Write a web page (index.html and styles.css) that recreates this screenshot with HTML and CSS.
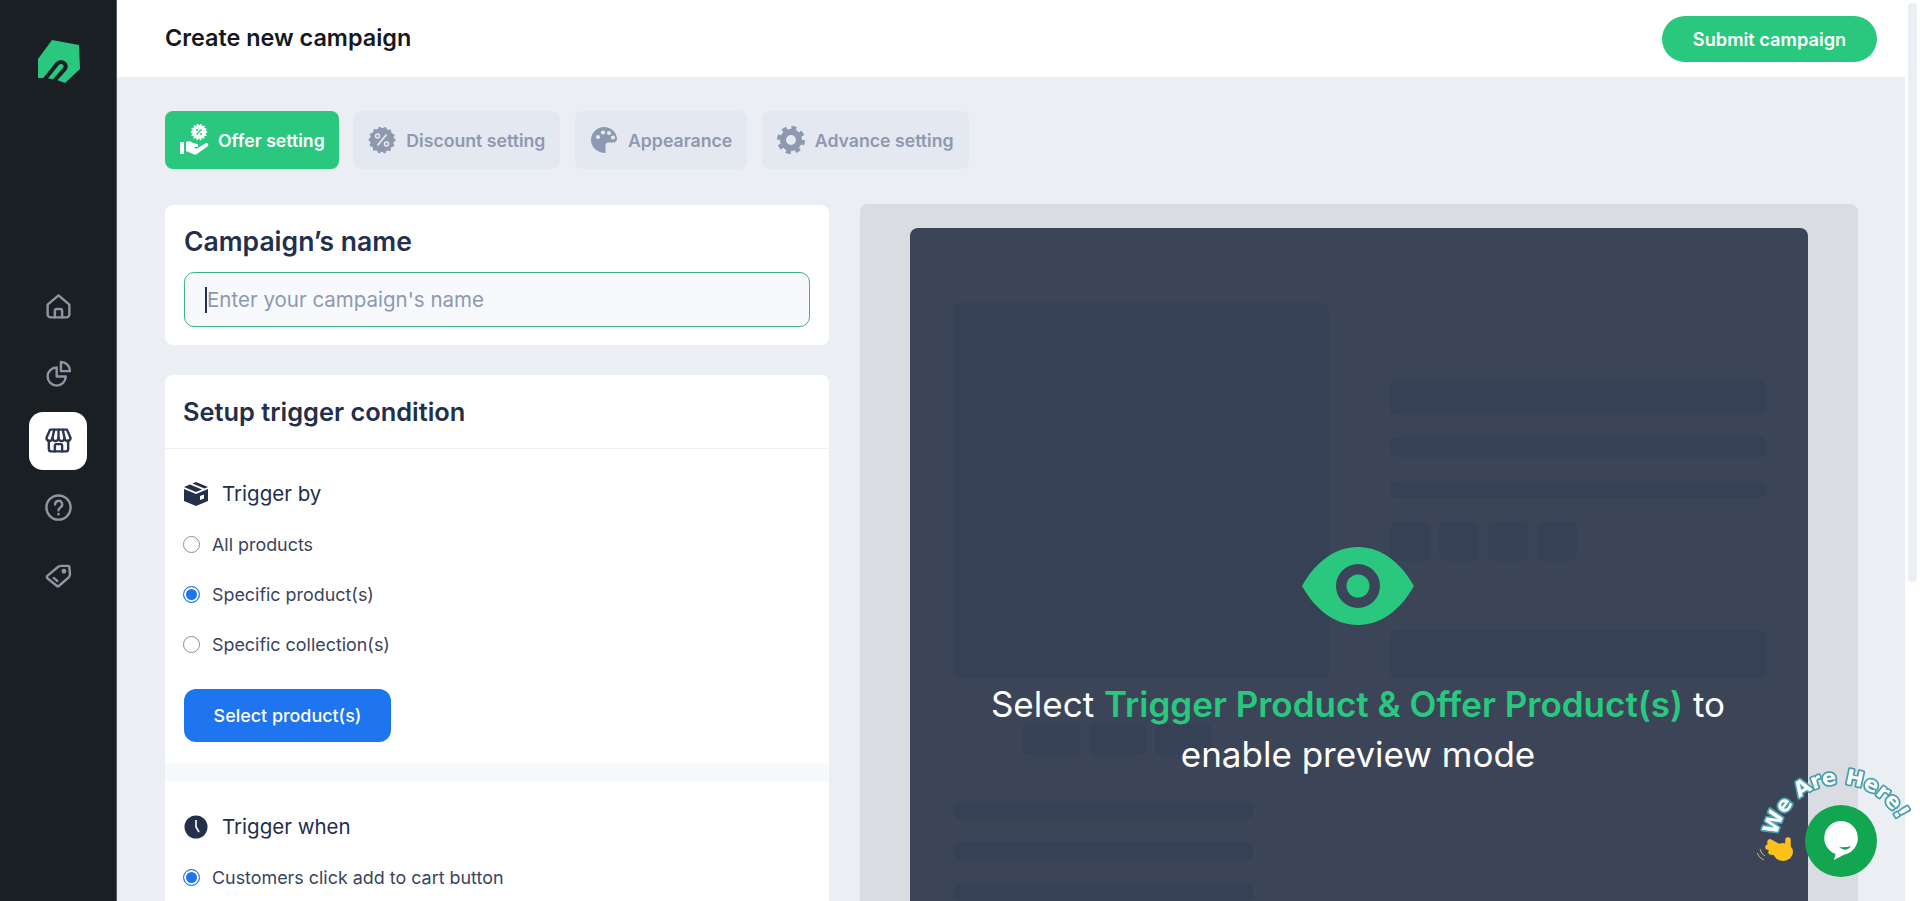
FILE: index.html
```html
<!DOCTYPE html>
<html lang="en">
<head>
    <meta charset="UTF-8">
    <title>Create new campaign</title>
    <link rel="stylesheet" href="styles.css">
</head>
<body>
<div class="app">
    <aside class="sidebar">
        <div class="logo">
            <svg width="42" height="44" viewBox="0 0 42 44"><path d="M14 1 L41 6 L42 30 L27 44 L19 41 L8 39 L0 39 L0 20 Z" fill="#2ac87e"/><path d="M7 40 L19 25 Q23 21 27 25 Q29 28 26 31 L16 42" fill="none" stroke="#1a1f24" stroke-width="4"/></svg>
        </div>
        <nav class="nav">
            <a class="nav-item"><svg viewBox="0 0 24 24"><path d="M3 10.5 L12 2.8 L21 10.5 V18.5 a2.5 2.5 0 0 1-2.5 2.5 H5.5 A2.5 2.5 0 0 1 3 18.5 Z"/><path d="M9 21 V15.5 a1.5 1.5 0 0 1 1.5-1.5 h3 a1.5 1.5 0 0 1 1.5 1.5 V21"/></svg></a>
            <a class="nav-item"><svg viewBox="0 0 24 24"><path d="M10.5 7 a7.5 7.5 0 1 0 7.5 7.5 h-7.5 Z"/><path d="M14 2.5 a7.5 7.5 0 0 1 7.5 7.5 H14 Z"/></svg></a>
            <a class="nav-item active"><svg viewBox="0 0 24 24"><path d="M5 3 H19 L22 10 a2.5 2.5 0 0 1-5 0 a2.5 2.5 0 0 1-5 0 a2.5 2.5 0 0 1-5 0 a2.5 2.5 0 0 1-5 0 Z"/><path d="M7 10 L8.5 3 M12 10 V3 M17 10 L15.5 3"/><path d="M4 12 V19 a2 2 0 0 0 2 2 H18 a2 2 0 0 0 2-2 V12"/><path d="M9 21 V16 a1 1 0 0 1 1-1 h4 a1 1 0 0 1 1 1 V21"/></svg></a>
            <a class="nav-item"><svg viewBox="0 0 24 24"><circle cx="12" cy="12" r="10"/><path d="M9.2 9.5 a2.9 2.9 0 1 1 4.4 2.4 c-1 .7-1.6 1.2-1.6 2.4"/><path d="M12 17.4 v.2"/></svg></a>
            <a class="nav-item"><svg viewBox="0 0 24 24"><path d="M2.5 12.5 L11.5 5 Q12.5 4 14 4 H20 a1 1 0 0 1 1 1 L21.5 11 Q21.5 12.5 20.5 13.5 L12.5 20.5 Q11.5 21.5 10.5 20.5 L3 14.5 Q2 13.5 2.5 12.5 Z"/><circle cx="16.5" cy="8.5" r="1"/><path d="M8 14 L11 16.5"/></svg></a>
        </nav>
    </aside>

    <main class="main">
        <header class="topbar">
            <h1 class="page-title">Create new campaign</h1>
            <button class="submit-btn">Submit campaign</button>
        </header>

        <div class="content">
            <div class="tabs">
                <div class="tab selected">
                    <svg class="tab-icon offer" viewBox="0 0 32 32"><circle cx="20" cy="8" r="7" fill="#fff"/><circle cx="20" cy="8" r="7.4" fill="none" stroke="#fff" stroke-width="1.8" stroke-linecap="round" stroke-dasharray="0 3.32"/><path d="M17.5 10.5 L22.5 5.5" stroke="#2ac87e" stroke-width="1.3"/><circle cx="18" cy="6" r="1" fill="#2ac87e"/><circle cx="22" cy="10" r="1" fill="#2ac87e"/><rect x="1" y="18" width="4" height="12" fill="#fff"/><path d="M7 18 Q11 16 14 19 L18 20 Q20 21 18.5 23 L15 23 L17 25 L27 19 Q30 19 29 22 L18 30 Q16 31 14 30 L7 27 Z" fill="#fff"/></svg>
                    <span>Offer setting</span>
                </div>
                <div class="tab">
                    <svg class="tab-icon" viewBox="0 0 28 28"><circle cx="14" cy="14" r="12" fill="#8e99b0"/><circle cx="14" cy="14" r="12" fill="none" stroke="#8e99b0" stroke-width="3" stroke-linecap="round" stroke-dasharray="0 5.386"/><path d="M9.5 19.5 L18.5 8.5" stroke="#e4e8f0" stroke-width="1.8"/><circle cx="9.5" cy="10" r="2" fill="none" stroke="#e4e8f0" stroke-width="1.5"/><circle cx="18.5" cy="18" r="2" fill="none" stroke="#e4e8f0" stroke-width="1.5"/></svg>
                    <span>Discount setting</span>
                </div>
                <div class="tab">
                    <svg class="tab-icon" viewBox="0 0 28 28"><path d="M14 1 C21 1 27 6.5 27 13 C27 15 25.5 16.5 23 16.5 H18.5 C16 16.5 15.5 18 15.5 20 V27 C7.5 27 1 21 1 14 C1 7 7 1 14 1 Z" fill="#8e99b0"/><circle cx="8" cy="11" r="2.1" fill="#e4e8f0"/><circle cx="13" cy="6.5" r="2.1" fill="#e4e8f0"/><circle cx="19" cy="7" r="2.1" fill="#e4e8f0"/><circle cx="23" cy="11.5" r="2.1" fill="#e4e8f0"/></svg>
                    <span>Appearance</span>
                </div>
                <div class="tab">
                    <svg class="tab-icon" viewBox="0 0 28 28"><circle cx="14" cy="14" r="8" fill="none" stroke="#8e99b0" stroke-width="6"/><circle cx="14" cy="14" r="12" fill="none" stroke="#8e99b0" stroke-width="4" stroke-dasharray="4.9 4.52"/></svg>
                    <span>Advance setting</span>
                </div>
            </div>

            <div class="columns">
                <section class="settings">
                    <div class="card name-card">
                        <h2 class="card-title name-title">Campaign’s name</h2>
                        <div class="input"><span class="caret"></span>Enter your campaign's name</div>
                    </div>

                    <div class="card trigger-card">
                        <h2 class="card-title trigger-title">Setup trigger condition</h2>
                        <div class="group">
                            <h3 class="group-title">
                                <svg class="group-icon" viewBox="0 0 26 26"><path d="M1 8 L13 13 V25 L1 20 Z M25 8 L13 13 V25 L25 20 Z" fill="#232f4b"/><path d="M1 6 L7 3.5 L19 8.5 L13 11 Z M9.5 2.5 L13 1 L25 6 L21.5 7.5 Z" fill="#232f4b"/><path d="M17 15 V19 L21 17.5 V13.5 Z" fill="#fff"/></svg>
                                Trigger by
                            </h3>
                            <label class="radio"><span class="dot"></span>All products</label>
                            <label class="radio"><span class="dot on"></span>Specific product(s)</label>
                            <label class="radio"><span class="dot"></span>Specific collection(s)</label>
                            <button class="select-btn">Select product(s)</button>
                        </div>
                        <div class="band"></div>
                        <div class="group">
                            <h3 class="group-title">
                                <svg class="group-icon" viewBox="0 0 26 26"><circle cx="13" cy="13" r="11.5" fill="#232f4b"/><path d="M13 6 V13 L16 18" fill="none" stroke="#fff" stroke-width="1.6"/></svg>
                                Trigger when
                            </h3>
                            <label class="radio"><span class="dot on"></span>Customers click add to cart button</label>
                        </div>
                    </div>
                </section>

                <section class="preview">
                    <div class="preview-inner">
                        <div class="skeleton">
                            <div class="sk-left">
                                <div class="sk sk-image"></div>
                                <div class="sk-thumbs">
                                    <div class="sk"></div>
                                    <div class="sk"></div>
                                    <div class="sk"></div>
                                </div>
                                <div class="sk sk-line"></div>
                                <div class="sk sk-line"></div>
                                <div class="sk sk-line"></div>
                            </div>
                            <div class="sk-right">
                                <div class="sk sk-title"></div>
                                <div class="sk sk-row"></div>
                                <div class="sk sk-row short"></div>
                                <div class="sk-swatches">
                                    <div class="sk"></div>
                                    <div class="sk"></div>
                                    <div class="sk"></div>
                                    <div class="sk"></div>
                                </div>
                                <div class="sk sk-buy"></div>
                            </div>
                        </div>
                        <div class="overlay">
                            <svg class="eye" viewBox="0 0 112 78"><path fill-rule="evenodd" d="M0 39 C14 14 34 0 56 0 C78 0 98 14 112 39 C98 64 78 78 56 78 C34 78 14 64 0 39 Z M56 17 a22 22 0 1 0 0 44 a22 22 0 1 0 0-44 Z" fill="#2ac87e"/><circle cx="56" cy="39" r="11.5" fill="#2ac87e"/></svg>
                            <p class="overlay-text">Select <b>Trigger Product &amp; Offer Product(s)</b> to<br>enable preview mode</p>
                        </div>
                    </div>
                </section>
            </div>
        </div>
    </main>

    <div class="scrollbar"><div class="thumb"></div></div>
</div>

<div class="chat">
    <svg width="170" height="125" viewBox="0 0 170 125">
        <defs><path id="arc" d="M27 76 A64 64 0 0 1 150 66"/></defs>
        <text class="chat-label"><textPath href="#arc" textLength="160" lengthAdjust="spacingAndGlyphs">We Are Here!</textPath></text>
        <circle cx="91" cy="81" r="36" fill="#11a64f"/>
        <path d="M91 61 a17 17 0 0 1 3 33.7 L84 100 L85.5 94 A17 17 0 0 1 91 61 Z" fill="#fff"/>
        <path d="M89 87 Q95 88 101 86 Q96 93 89 87 Z" fill="#11a64f"/>
        <g class="wave">
            <ellipse cx="33" cy="92" rx="10" ry="9" fill="#fcc21b" stroke="none"/>
            <path d="M31 88 L20 82 M31 90 L18 87 M31 93 L21 92 M38 88 L38 80"/>
        </g>
        <path d="M10 89 Q11 94 15 96 M7 93 Q9 98 14 100" fill="none" stroke="#d9b64a" stroke-width="1"/>
    </svg>
</div>
</body>
</html>
```

FILE: styles.css
```css
*{
    margin: 0;
    padding: 0;
    box-sizing: border-box;
}
html,body{
    height: 901px;
    overflow: hidden;
}
body{
    font-family: Inter, "Noto Sans", sans-serif;
    color: #232f4b;
    background: #fff;
}
button{
    border: 0;
    font-family: inherit;
}
.app{
    display: flex;
    height: 901px;
}

/* sidebar */
.sidebar{
    width: 117px;
    flex-shrink: 0;
    background: #1a1f24;
    border-right: 1px solid #555a60;
}
.logo{
    height: 277px;
    padding: 39px 0 0 38px;
}
.nav{
    display: flex;
    flex-direction: column;
    align-items: center;
    gap: 9.3px;
}
.nav-item{
    width: 58px;
    height: 58px;
    border-radius: 14px;
    display: flex;
    align-items: center;
    justify-content: center;
}
.nav-item svg{
    width: 29px;
    height: 29px;
    fill: none;
    stroke: #8e95a3;
    stroke-width: 2;
    stroke-linecap: round;
    stroke-linejoin: round;
}
.nav-item.active{
    background: #fff;
}
.nav-item.active svg{
    stroke: #2b3654;
}

/* top */
.main{
    flex: 1;
    min-width: 0;
    background: #ebeef3;
    overflow: hidden;
}
.topbar{
    height: 77px;
    background: #fff;
    display: flex;
    align-items: center;
    justify-content: space-between;
    padding: 0 28px 0 48px;
}
.page-title{
    font-size: 23.4px;
    font-weight: 600;
    color: #14181f;
    margin-bottom: 2px;
}
.submit-btn{
    width: 215px;
    height: 46px;
    border-radius: 23px;
    background: #2ac87e;
    color: #fff;
    font-size: 18.2px;
    font-weight: 600;
}
.content{
    padding: 34px 47px 0 48px;
}

/* tabs */
.tabs{
    display: flex;
    gap: 14.5px;
}
.tab{
    height: 58px;
    padding: 0 15px;
    border-radius: 8px;
    background: #e4e8f0;
    color: #8e99b0;
    font-size: 17.7px;
    font-weight: 600;
    display: flex;
    align-items: center;
    gap: 10px;
}
.tab.selected{
    background: #2ac87e;
    color: #fff;
    padding: 0 14px;
    gap: 7px;
}
.tab-icon{
    width: 28px;
    height: 28px;
}
.tab-icon.offer{
    width: 32px;
    height: 32px;
}

/* left column */
.columns{
    display: grid;
    grid-template-columns: 664px 998px;
    gap: 31px;
    margin-top: 36px;
}
.card{
    background: #fff;
    border-radius: 8px;
}
.name-card{
    height: 140px;
    padding: 21px 19px;
    margin-bottom: 30px;
}
.card-title{
    font-size: 25.4px;
    font-weight: 600;
    line-height: 30px;
    color: #232f4b;
}
.name-title{
    font-size: 26.5px;
}
.input{
    margin-top: 16px;
    height: 55px;
    display: flex;
    align-items: center;
    padding: 0 20px;
    border: 1.5px solid #3fb583;
    border-radius: 10px;
    background: #f7f9fc;
    color: #8e99b0;
    font-size: 20.5px;
}
.caret{
    width: 2px;
    height: 26px;
    background: #232f4b;
}
.trigger-title{
    height: 74px;
    padding: 22px 18px 0;
    border-bottom: 1px solid #eef0f4;
}
.group{
    padding: 30px 18px 21px;
}
.group-title{
    display: flex;
    align-items: center;
    gap: 13px;
    font-size: 20.5px;
    font-weight: 400;
    line-height: 30px;
    margin-bottom: 10px;
}
.group-icon{
    width: 26px;
    height: 26px;
}
.radio{
    display: flex;
    align-items: center;
    gap: 12px;
    height: 50px;
    font-size: 17.9px;
    color: #3a445c;
}
.dot{
    width: 17px;
    height: 17px;
    border-radius: 50%;
    border: 1.5px solid #8f8f8f;
    background: #fff;
    flex-shrink: 0;
}
.dot.on{
    border-color: #1f74f0;
    background: #1f74f0;
    box-shadow: inset 0 0 0 2px #fff;
}
.select-btn{
    display: block;
    width: 207px;
    height: 53px;
    margin: 20px 0 0 1px;
    border-radius: 12px;
    background: #1f74f0;
    color: #fff;
    font-size: 17.9px;
    font-weight: 500;
}
.band{
    height: 19px;
    background: #f7f9fc;
}

/* preview */
.preview{
    background: #d9dce1;
    border-radius: 8px;
    padding: 24px 50px 0;
    height: 721px;
    margin-top: -1px;
}
.preview-inner{
    position: relative;
    height: 700px;
    background: #3c4558;
    border-radius: 8px 8px 0 0;
    padding: 75px 44px 0;
}
.skeleton{
    display: grid;
    grid-template-columns: 375px 376px;
    gap: 61px;
}
.sk{
    background: #374155;
    border-radius: 6px;
}
.sk-image{
    height: 375px;
    margin-bottom: 46px;
}
.sk-thumbs{
    display: flex;
    gap: 9px;
    padding-left: 69px;
    margin-bottom: 46px;
}
.sk-thumbs .sk{
    width: 57px;
    height: 31px;
}
.sk-line{
    width: 299px;
    height: 18px;
    margin-bottom: 23px;
}
.sk-right{
    padding-top: 76px;
}
.sk-title{
    height: 36px;
    margin-bottom: 22px;
}
.sk-row{
    height: 20px;
    margin-bottom: 24px;
}
.sk-row.short{
    height: 17px;
}
.sk-swatches{
    display: flex;
    gap: 9px;
    margin-bottom: 69px;
}
.sk-swatches .sk{
    width: 40px;
    height: 39px;
}
.sk-buy{
    height: 48px;
}
.overlay{
    position: absolute;
    top: 0;
    left: 0;
    right: 2px;
    padding-top: 319px;
    text-align: center;
}
.eye{
    width: 112px;
    height: 78px;
    display: block;
    margin: 0 auto 54px;
}
.overlay-text{
    font-size: 35px;
    line-height: 50px;
    color: #fff;
    font-weight: 400;
}
.overlay-text b{
    color: #2ac87e;
    font-weight: 600;
}

/* scrollbar + chat */
.scrollbar{
    width: 15px;
    flex-shrink: 0;
    background: #fff;
    padding: 3px 3px 0 3px;
}
.thumb{
    height: 579px;
    background: #ebeef3;
    border-radius: 4px;
}
.chat{
    position: fixed;
    left: 1750px;
    top: 760px;
}
.chat svg{
    overflow: visible;
}
.chat-label{
    font-family: "DejaVu Sans", sans-serif;
    font-size: 21px;
    font-weight: 700;
    fill: #fff;
    stroke: #4a9fae;
    stroke-width: 3.5px;
    stroke-linejoin: round;
    paint-order: stroke;
}
.wave path{
    fill: none;
    stroke: #fcc21b;
    stroke-width: 5.5;
    stroke-linecap: round;
}
```
